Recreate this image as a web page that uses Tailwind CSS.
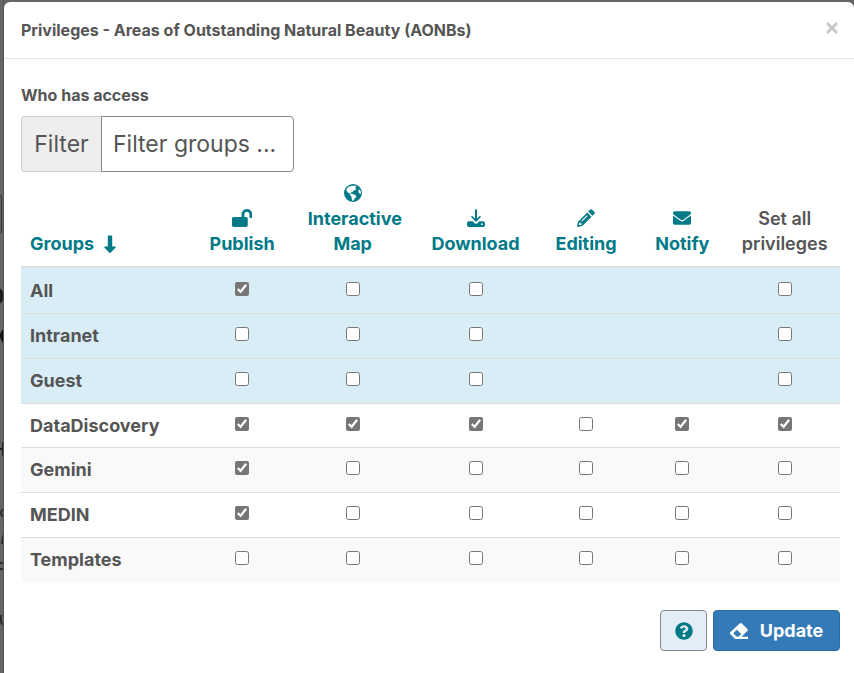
<!DOCTYPE html>
<html lang="en">
<head>
  <meta charset="UTF-8" />
  <meta name="viewport" content="width=device-width, initial-scale=1.0" />
  <title>Privileges</title>
  <script src="https://cdn.jsdelivr.net/npm/@tailwindcss/browser@4"></script>
</head>

<body class="min-h-screen bg-[#676563] pt-0.5 pl-1 font-['Inter',sans-serif] text-[#555]">

  <!-- Page behind the dialog -->
  <div class="absolute inset-y-0 left-0 w-1 overflow-hidden border-r border-[#555]" aria-hidden="true">
    <div class="absolute top-[194px] -left-5 h-10 w-[22px] rounded border border-[#333]"></div>
    <div class="absolute top-[287px] -left-3.5 size-[18px] rounded-full border-4 border-[#1c1c1c]"></div>
    <div class="absolute top-[327px] left-0 size-[18px] rounded-full bg-[#111]"></div>
    <div class="absolute top-[448px] left-0 h-0.5 w-1 bg-[#222]"></div>
    <div class="absolute top-[442px] left-0.5 h-3.5 w-0.5 bg-[#222]"></div>
    <div class="absolute top-[508px] left-0 size-2.5 rounded-full border-2 border-[#2c2c2c]"></div>
    <div class="absolute top-[532px] left-0.5 h-3 w-0.5 rotate-12 bg-[#2c2c2c]"></div>
    <div class="absolute top-[562px] -left-1 size-2 border-y-2 border-[#2c2c2c]"></div>
    <div class="absolute top-[615px] left-0 size-2.5 rounded-b border-2 border-t-0 border-[#2c2c2c]"></div>
  </div>

  <!-- Dialog -->
  <main class="relative min-h-[calc(100vh-2px)] rounded-t-md bg-white">
    <header class="flex h-[57px] items-center justify-between border-b border-[#e5e5e5] pr-[15px] pl-[17px]">
      <h1 class="text-base leading-5 font-bold">Privileges - Areas of Outstanding Natural Beauty (AONBs)</h1>
      <button type="button" aria-label="Close" class="mb-1">
        <svg class="size-3.5" viewBox="0 0 14 14" stroke="#c8c8c8" stroke-width="3"><path d="M2 2l10 10M12 2L2 12" /></svg>
      </button>
    </header>

    <div class="pt-[26px] pr-3.5 pl-[17px]">
      <h2 class="text-base leading-5 font-bold">Who has access</h2>

      <div class="mt-[11px] flex h-14 w-[273px] text-[23px]">
        <label for="filter" class="flex w-20 shrink-0 items-center justify-center rounded-l border border-r-0 border-[#ccc] bg-[#eee]">Filter</label>
        <input id="filter" type="text" placeholder="Filter groups ..." class="w-full min-w-0 rounded-r border border-[#888] px-[11px] placeholder:text-[#555]" />
      </div>

      <table class="w-full table-fixed border-separate border-spacing-0 text-center text-lg">
        <colgroup>
          <col class="w-[21%]" />
          <col class="w-[12%]" />
          <col class="w-[15%]" />
          <col class="w-[15%]" />
          <col class="w-[12%]" />
          <col class="w-[11.5%]" />
          <col class="w-[13.5%]" />
        </colgroup>
        <thead class="leading-[25px] text-[#007a87] [&_th]:border-b-2 [&_th]:border-[#ddd] [&_th]:pt-3 [&_th]:pb-2.5 [&_th]:align-bottom [&_svg]:mx-auto [&_svg]:mb-1 [&_svg]:h-[18px]">
          <tr>
            <th class="pl-[9px] text-left">
              <div class="flex items-center gap-2.5">Groups
                <svg class="m-0! h-[18px] w-3" viewBox="0 0 12 18" fill="currentColor"><path d="M3.800 1q0-.6.6-.6h3.200q.6 0 .6.6v10.600h3q1 .2.4 1L6.600 17.700q-.6.5-1.200 0L.4 12.600q-.6-.8.4-1h3z" /></svg>
              </div>
            </th>
            <th>
              <svg viewBox="0 0 576 512" fill="currentColor"><path d="M423.500 0C339.500.3 272 69.500 272 153.500V224H48c-26.500 0-48 21.500-48 48v192c0 26.500 21.500 48 48 48h352c26.500 0 48-21.500 48-48V272c0-26.500-21.500-48-48-48h-48v-71.100c0-39.600 31.700-72.500 71.300-72.900 40-.4 72.700 32.100 72.700 72v80c0 13.300 10.700 24 24 24h32c13.300 0 24-10.700 24-24v-80C576 68 507.500-.3 423.500 0z" /></svg>
              Publish
            </th>
            <th>
              <svg viewBox="0 0 18 18" fill="currentColor"><path fill-rule="evenodd" d="M9 0a9 9 0 1 0 0 18A9 9 0 0 0 9 0zM2.200 5.600L4.200 3l3-1.300 4.600.1.700 1-1.600.8 1.200 1.200-.5 1.200-2 .6-1.200 1.600-1.800.3.300 1.300 2.800.4 2.700 1.700-.5 1.600-1.300 1-.8 1.700-1.300.8-.8-2-.2-2.200-1.300-1.600.2-1.200-2.200-1.300L3 7.400zM14.500 6l1.300-.5 1 2 .1 2.500-1.400-.4-1-1.300z" /></svg>
              &nbsp;Interactive Map
            </th>
            <th>
              <svg viewBox="0 0 18 18" fill="currentColor"><path d="M8 .8q1-1 2 0v8.700l2.700-2.600q1.200-.2 1.200 1.200L9 13 4.100 8.100q0-1.400 1.200-1.200L8 9.500z" /><path fill-rule="evenodd" d="M2 12.300h3.600L8 14.400q1 .7 2 0l2.400-2.100H16q2 0 2 2v1.700q0 2-2 2H2q-2 0-2-2v-1.700q0-2 2-2zm13 2a.9.9 0 1 0 0 1.800.9.9 0 0 0 0-1.800z" /></svg>
              Download
            </th>
            <th>
              <svg viewBox="0 0 18 18" fill="currentColor"><path d="M12.900.8q1.200-1.200 2.400 0l1.900 1.900q1.200 1.200 0 2.400l-1.700 1.700-4.300-4.300z" /><path fill-rule="evenodd" d="M10.300 3.400l4.300 4.300L5.300 17 .7 18q-.8.1-.7-.7L1 12.700zM9.900 6.200l-5.600 5.600.8.8 5.600-5.600zM2.400 13.400l-.6 2.100.8.8 2.100-.6v-1.300H3.600v-1z" /></svg>
              Editing
            </th>
            <th>
              <svg viewBox="0 0 512 512" fill="currentColor"><path d="M502.300 190.800c3.900-3.100 9.700-.2 9.700 4.700V400c0 26.500-21.500 48-48 48H48c-26.500 0-48-21.500-48-48V195.600c0-5 5.700-7.800 9.700-4.700 22.400 17.400 52.100 39.500 154.100 113.600 21.100 15.400 56.700 47.800 92.200 47.600 35.700.3 72-32.800 92.300-47.600 102-74.100 131.600-96.300 154-113.700zM256 320c23.200.4 56.600-29.200 73.400-41.400 132.700-96.300 142.800-104.700 173.400-128.700 5.800-4.500 9.200-11.500 9.200-18.900v-19c0-26.500-21.500-48-48-48H48c-26.500 0-48 21.500-48 48v19c0 7.400 3.400 14.300 9.200 18.900 30.600 23.900 40.700 32.400 173.400 128.700 16.800 12.200 50.200 41.800 73.400 41.400z" /></svg>
              Notify
            </th>
            <th class="font-semibold text-[#555]">Set all privileges</th>
          </tr>
        </thead>
        <tbody class="[&_td]:border-t [&_td]:border-[#ddd] [&_th]:border-t [&_th]:border-[#ddd] [&_th]:pl-[9px] [&_th]:text-left [&_td]:pb-1.5 [&>tr]:h-[45px] [&_input]:size-3.5 [&_input]:align-middle [&_input]:accent-[#767676]">
          <tr class="bg-[#d9edf7] [&>*]:border-t-0!">
            <th scope="row">All</th>
            <td><input type="checkbox" aria-label="All publish" checked /></td>
            <td><input type="checkbox" aria-label="All interactive map" /></td>
            <td><input type="checkbox" aria-label="All download" /></td>
            <td></td>
            <td></td>
            <td><input type="checkbox" aria-label="All set all" /></td>
          </tr>
          <tr class="bg-[#d9edf7]">
            <th scope="row">Intranet</th>
            <td><input type="checkbox" aria-label="Intranet publish" /></td>
            <td><input type="checkbox" aria-label="Intranet interactive map" /></td>
            <td><input type="checkbox" aria-label="Intranet download" /></td>
            <td></td>
            <td></td>
            <td><input type="checkbox" aria-label="Intranet set all" /></td>
          </tr>
          <tr class="bg-[#d9edf7]">
            <th scope="row">Guest</th>
            <td><input type="checkbox" aria-label="Guest publish" /></td>
            <td><input type="checkbox" aria-label="Guest interactive map" /></td>
            <td><input type="checkbox" aria-label="Guest download" /></td>
            <td></td>
            <td></td>
            <td><input type="checkbox" aria-label="Guest set all" /></td>
          </tr>
          <tr class="h-11!">
            <th scope="row">DataDiscovery</th>
            <td><input type="checkbox" aria-label="DataDiscovery publish" checked /></td>
            <td><input type="checkbox" aria-label="DataDiscovery interactive map" checked /></td>
            <td><input type="checkbox" aria-label="DataDiscovery download" checked /></td>
            <td><input type="checkbox" aria-label="DataDiscovery editing" /></td>
            <td><input type="checkbox" aria-label="DataDiscovery notify" checked /></td>
            <td><input type="checkbox" aria-label="DataDiscovery set all" checked /></td>
          </tr>
          <tr class="bg-[#f9f9f9]">
            <th scope="row">Gemini</th>
            <td><input type="checkbox" aria-label="Gemini publish" checked /></td>
            <td><input type="checkbox" aria-label="Gemini interactive map" /></td>
            <td><input type="checkbox" aria-label="Gemini download" /></td>
            <td><input type="checkbox" aria-label="Gemini editing" /></td>
            <td><input type="checkbox" aria-label="Gemini notify" /></td>
            <td><input type="checkbox" aria-label="Gemini set all" /></td>
          </tr>
          <tr>
            <th scope="row">MEDIN</th>
            <td><input type="checkbox" aria-label="MEDIN publish" checked /></td>
            <td><input type="checkbox" aria-label="MEDIN interactive map" /></td>
            <td><input type="checkbox" aria-label="MEDIN download" /></td>
            <td><input type="checkbox" aria-label="MEDIN editing" /></td>
            <td><input type="checkbox" aria-label="MEDIN notify" /></td>
            <td><input type="checkbox" aria-label="MEDIN set all" /></td>
          </tr>
          <tr class="bg-[#f9f9f9]">
            <th scope="row">Templates</th>
            <td><input type="checkbox" aria-label="Templates publish" /></td>
            <td><input type="checkbox" aria-label="Templates interactive map" /></td>
            <td><input type="checkbox" aria-label="Templates download" /></td>
            <td><input type="checkbox" aria-label="Templates editing" /></td>
            <td><input type="checkbox" aria-label="Templates notify" /></td>
            <td><input type="checkbox" aria-label="Templates set all" /></td>
          </tr>
        </tbody>
      </table>

      <div class="mt-7 flex justify-end gap-1.5">
        <button type="button" aria-label="Help" class="flex h-[41px] w-[47px] items-center justify-center rounded border border-[#888] bg-[#e3edf7] text-[#007a87]">
          <svg class="size-[18px]" viewBox="0 0 512 512" fill="currentColor"><path d="M504 256c0 136.997-111.043 248-248 248S8 392.997 8 256C8 119.083 119.043 8 256 8s248 111.083 248 248zM262.655 90c-54.497 0-89.255 22.957-116.549 63.758-3.536 5.286-2.353 12.415 2.715 16.258l34.699 26.310c5.205 3.947 12.621 3.008 16.665-2.122 17.864-22.658 30.113-35.797 57.303-35.797 20.429 0 45.698 13.148 45.698 32.958 0 14.976-12.363 22.667-32.534 33.976C247.128 238.528 216 254.941 216 296v4c0 6.627 5.373 12 12 12h56c6.627 0 12-5.373 12-12v-1.333c0-28.462 83.186-29.647 83.186-106.667 0-58.002-60.165-102-116.531-102zM256 338c-25.365 0-46 20.635-46 46 0 25.364 20.635 46 46 46s46-20.636 46-46c0-25.365-20.635-46-46-46z" /></svg>
        </button>
        <button type="button" class="flex h-[41px] w-[127px] items-center justify-center gap-3 rounded border border-[#2e6da4] bg-[#337ab7] text-lg font-bold text-white">
          <svg class="h-4 w-[18px]" viewBox="0 0 18 16" fill="currentColor"><path fill-rule="evenodd" d="M9.700.5q1.100-1 2.200 0l5.400 5.400q1.100 1.100 0 2.200l-5.800 5.600H18V16H5.200L.5 11.300q-1-1.100 0-2.200zM6.800 6.700L3.200 10.200l3.300 3.400h2.200l2.500-2.500z" /></svg>
          Update
        </button>
      </div>
    </div>
  </main>

</body>
</html>
